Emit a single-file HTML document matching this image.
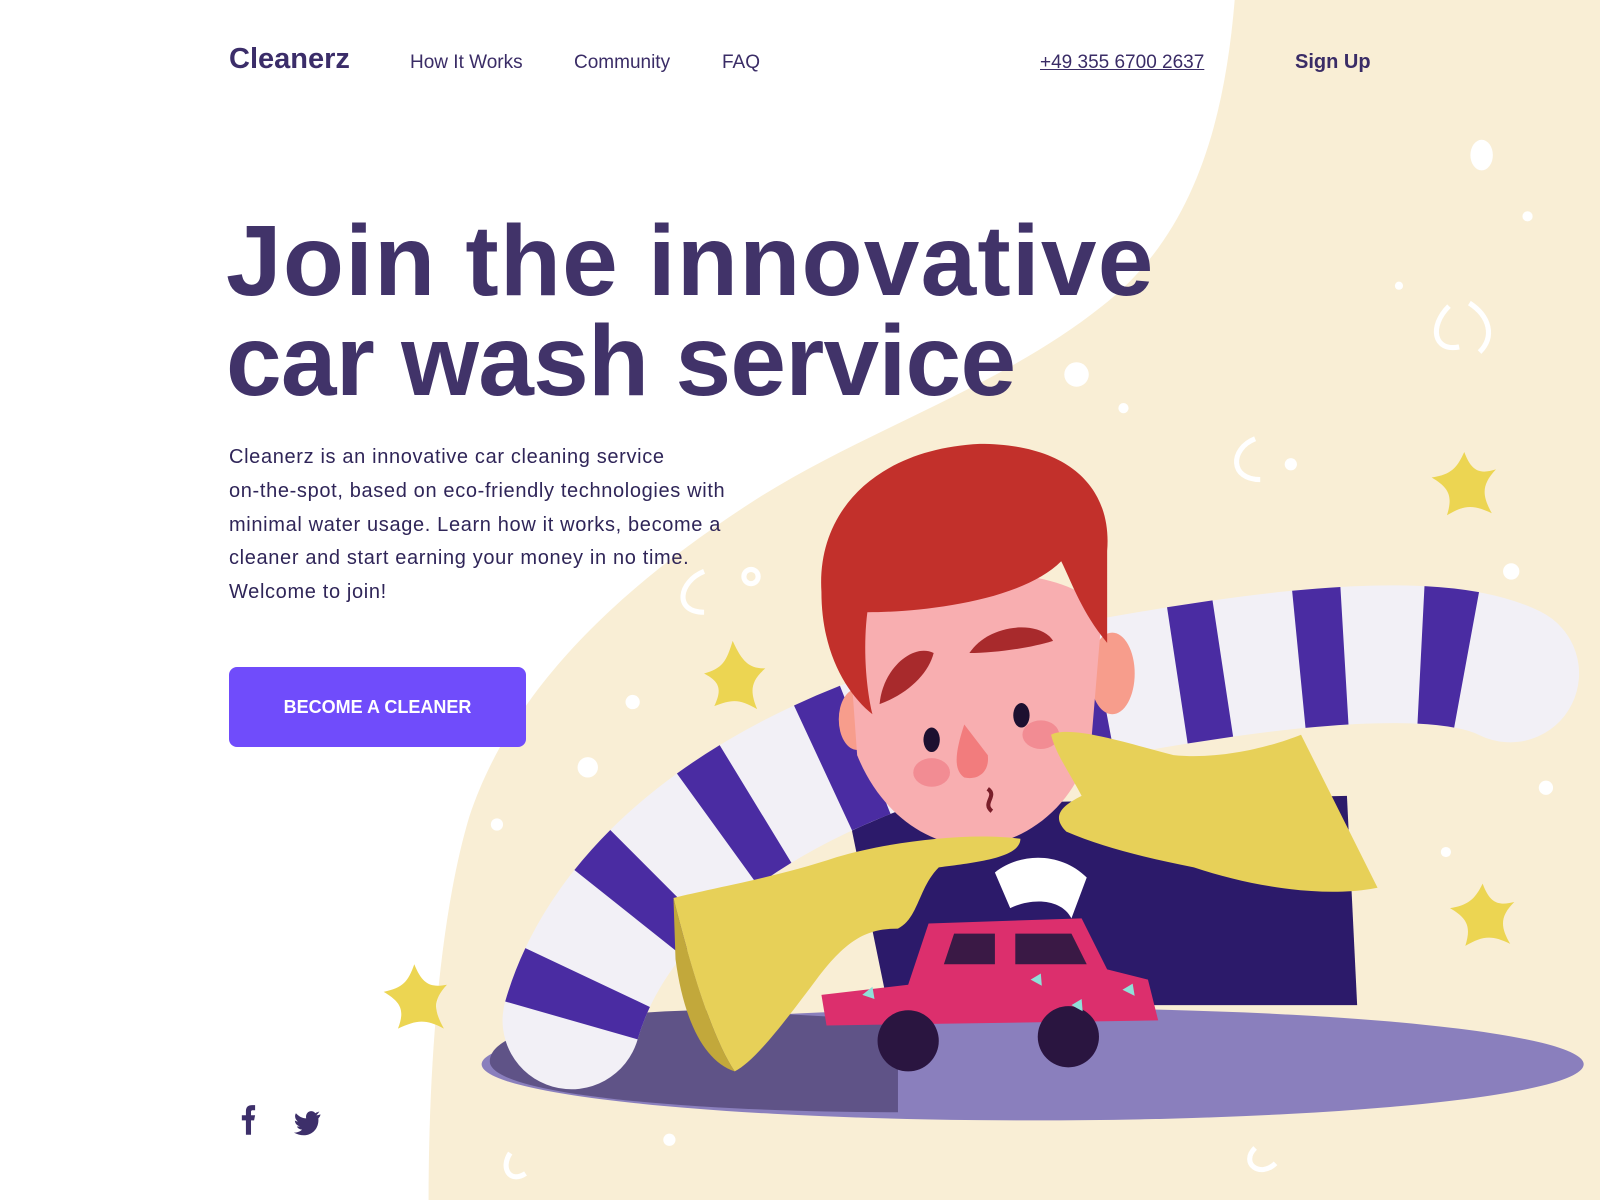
<!DOCTYPE html>
<html><head><meta charset="utf-8"><style>
html,body{margin:0;padding:0;width:1600px;height:1200px;overflow:hidden;background:#fff;font-family:"Liberation Sans",sans-serif;color:#3d2f6a}
.abs{position:absolute}
svg.bg{position:absolute;left:0;top:0;width:1600px;height:1200px}
.nav{font-size:19px;color:#3a2c66;top:52px}
h1{position:absolute;left:226px;top:211px;margin:0;font-size:100px;line-height:100px;font-weight:bold;color:#413369;white-space:nowrap}
p{position:absolute;left:229px;top:441px;margin:0;font-size:20px;line-height:33.8px;color:#2f2558;letter-spacing:0.65px}
.btn{left:229px;top:667px;width:297px;height:80px;background:#704cfb;border-radius:8px;color:#fff;font-weight:bold;font-size:18px;line-height:80px;text-align:center}
</style></head><body>
<svg class="bg" viewBox="0 0 1568 1176" preserveAspectRatio="none">
<path d="M1210 0 C1200 120 1170 230 1080 300 C980 380 850 420 740 490 C600 580 500 680 460 800 C430 900 420 1050 420 1176 L1568 1176 L1568 0 Z" fill="#f9eed5"/>
<g fill="#fff">
<ellipse cx="1452" cy="152" rx="11" ry="15"/><circle cx="1497" cy="212" r="5"/><circle cx="1055" cy="367" r="12"/><circle cx="1101" cy="400" r="5"/>
<circle cx="1371" cy="280" r="4"/><circle cx="620" cy="688" r="7"/><circle cx="576" cy="752" r="10"/><circle cx="487" cy="808" r="6"/>
<circle cx="910" cy="1077" r="8"/><circle cx="1305" cy="1043" r="6"/><circle cx="1372" cy="1013" r="4"/><circle cx="656" cy="1117" r="6"/>
<circle cx="1515" cy="772" r="7"/><circle cx="1481" cy="560" r="8"/><circle cx="1417" cy="835" r="5"/><circle cx="1265" cy="455" r="6"/>
</g>
<g fill="none" stroke="#fff" stroke-width="5">
<path d="M1420 300 C1400 320 1405 345 1430 340"/><path d="M1440 297 C1460 310 1465 330 1450 345"/>
<path d="M1230 430 C1205 440 1205 470 1235 470"/><path d="M690 560 C665 570 660 600 690 600"/><circle cx="736" cy="565" r="7"/>
<path d="M500 1130 C490 1145 500 1160 515 1150"/><path d="M1230 1125 C1215 1140 1235 1155 1250 1140"/>
</g>
<g fill="#ecd552">
<path d="M718 628 C728 650 735 655 750 655 C735 668 735 678 742 695 C725 685 718 685 700 692 C708 675 705 668 690 660 C708 655 712 648 718 628Z"/>
<path d="M1435 443 C1442 462 1450 465 1466 460 C1452 475 1452 485 1462 503 C1443 494 1435 495 1418 505 C1424 486 1420 478 1403 468 C1423 465 1428 458 1435 443Z"/>
<path d="M406 945 C414 965 422 968 438 965 C424 980 425 990 435 1008 C416 998 408 1000 390 1008 C397 990 393 982 376 972 C395 968 400 962 406 945Z"/>
<path d="M1453 866 C1460 885 1468 888 1484 884 C1470 898 1470 908 1480 925 C1462 916 1453 917 1436 927 C1442 908 1438 900 1421 890 C1440 887 1446 880 1453 866Z"/>
</g>
<ellipse cx="1012" cy="1043" rx="540" ry="55" fill="#8a7fbd"/>
<path d="M480 1040 C480 1005 600 990 700 990 L880 1000 L880 1090 C700 1090 480 1075 480 1040Z" fill="#5f5387"/>
<path d="M830 790 L1320 780 L1330 985 L870 985 Z" fill="#2c1a6a"/>
<path d="M560 1000 C600 860 760 740 1000 690 C1200 650 1400 620 1480 660" fill="none" stroke="#f2f0f6" stroke-width="135" stroke-linecap="round"/>
<path d="M560 1000 C600 860 760 740 1000 690 C1200 650 1400 620 1480 660" fill="none" stroke="#4a2ca2" stroke-width="135" stroke-dasharray="45 75"/>
<ellipse cx="1090" cy="660" rx="22" ry="40" fill="#f79d8c"/>
<ellipse cx="840" cy="705" rx="18" ry="30" fill="#f79d8c"/>
<path d="M830 600 C860 560 1040 540 1080 600 L1070 720 C1060 790 1000 830 950 830 C900 825 860 790 840 740 Z" fill="#f8aeb0"/>
<path d="M805 580 C800 500 860 440 960 435 C1050 435 1090 480 1085 540 L1085 630 C1060 600 1050 570 1040 550 C1000 590 900 600 850 600 C845 640 850 680 855 700 C830 680 805 640 805 580Z" fill="#c2302b"/>
<path d="M862 690 C865 655 895 630 915 640 C910 660 890 680 862 690Z" fill="#a82a2c"/>
<path d="M950 640 C970 610 1020 608 1032 628 C1010 635 975 640 950 640Z" fill="#a82a2c"/>
<ellipse cx="913" cy="725" rx="8" ry="12" fill="#1d1030"/><ellipse cx="1001" cy="701" rx="8" ry="12" fill="#1d1030"/>
<path d="M945 710 C935 740 935 755 945 762 C960 765 970 755 968 740 Z" fill="#f27c7d"/>
<ellipse cx="913" cy="757" rx="18" ry="14" fill="#f28c93"/><ellipse cx="1020" cy="720" rx="18" ry="14" fill="#f28c93"/>
<path d="M968 773 C978 780 962 787 972 795" stroke="#7a1e2a" stroke-width="4" fill="none"/>
<path d="M1030 720 C1050 710 1110 730 1150 740 C1200 745 1250 730 1275 720 L1350 870 C1300 880 1230 870 1170 850 C1120 840 1080 830 1045 815 C1030 800 1040 790 1060 780 C1050 760 1035 740 1030 720Z" fill="#e7d058"/>
<path d="M660 880 C700 870 760 860 820 840 C870 825 950 815 1000 822 C1000 840 960 845 920 850 C900 870 900 900 880 910 C850 910 830 920 800 960 C770 1000 740 1040 720 1050 C700 1020 680 960 660 880Z" fill="#e7d058"/>
<path d="M660 880 C680 960 700 1020 720 1050 C690 1040 670 1000 662 940Z" fill="#c2a83b"/>
<path d="M975 855 C1000 835 1040 835 1065 860 L1050 900 C1040 880 1010 880 990 890 Z" fill="#fff"/>
<path d="M890 965 L910 905 L1060 900 L1085 950 L1125 960 L1135 1000 L810 1005 L805 975 Z" fill="#dc2f6d"/>
<path d="M925 945 L935 915 L975 915 L975 945Z M995 945 L995 915 L1050 915 L1065 945Z" fill="#3a1945"/>
<circle cx="890" cy="1020" r="30" fill="#2a1540"/><circle cx="1047" cy="1016" r="30" fill="#2a1540"/>
<g fill="#8fe0d8"><path d="M845 975 l10 -8 l2 12z"/><path d="M1010 960 l10 -6 l1 12z"/><path d="M1100 970 l10 -6 l2 12z"/><path d="M1050 985 l10 -6 l1 12z"/></g>
<path d="M241 1112 L241 1098 L237 1098 L237 1093 L241 1093 L241 1089 C241 1085 243 1083 247 1083 L250 1083 L250 1088 L248 1088 C246 1088 246 1089 246 1090 L246 1093 L250 1093 L249 1098 L246 1098 L246 1112 Z" fill="#3d2f6a"/>
<path d="M314 1092 C312 1093 311 1093 310 1093 C311 1092 312 1091 313 1089 C312 1090 310 1090 309 1091 C306 1087 299 1089 300 1096 C296 1096 293 1094 290 1091 C288 1094 290 1098 292 1099 C291 1099 290 1099 289 1098 C289 1101 291 1103 294 1104 C293 1104 292 1104 291 1104 C292 1106 294 1107 296 1107 C294 1109 291 1110 288 1110 C301 1117 313 1109 312 1096 C313 1095 314 1094 314 1092Z" fill="#3d2f6a"/>
</svg>
<div class="abs" style="left:229px;top:43px;font-size:29px;font-weight:bold;color:#3b2d69">Cleanerz</div>
<div class="abs nav" style="left:410px">How It Works</div>
<div class="abs nav" style="left:574px">Community</div>
<div class="abs nav" style="left:722px">FAQ</div>
<div class="abs nav" style="left:1040px;text-decoration:underline">+49 355 6700 2637</div>
<div class="abs nav" style="left:1295px;font-weight:bold;font-size:20px;top:51px">Sign Up</div>
<h1><span style="letter-spacing:1.2px">Join the innovative</span><br><span style="letter-spacing:-0.7px">car wash service</span></h1>
<p>Cleanerz is an innovative car cleaning service<br>on-the-spot, based on eco-friendly technologies with<br>minimal water usage. Learn how it works, become a<br>cleaner and start earning your money in no time.<br>Welcome to join!</p>
<div class="abs btn">BECOME A CLEANER</div>
</body></html>
